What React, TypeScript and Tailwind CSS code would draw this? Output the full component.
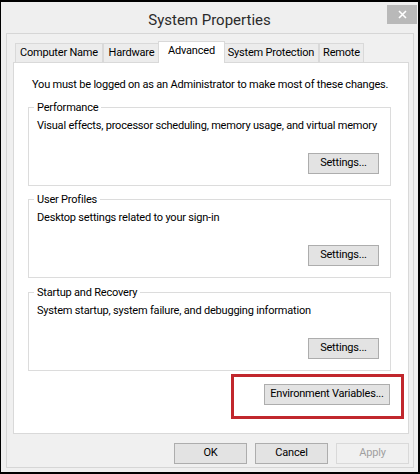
import React from "react";

const tabs = ["Computer Name", "Hardware", "Advanced", "System Protection", "Remote"];
const tabWidths: Record<string, string> = {
  "Computer Name": "w-[88px]",
  Hardware: "w-[57px]",
  Advanced: "w-[67px]",
  "System Protection": "w-[96px]",
  Remote: "w-[45px]",
};

function Button({ label, width, disabled }: { label: string; width: string; disabled?: boolean }) {
  return (
    <button
      className={`${width} h-[21px] border flex items-center justify-center whitespace-nowrap ${
        disabled ? "border-[#d9d9d9] bg-[#f0f0f0] text-[#a0a0a0]" : "border-[#adadad] bg-[#e3e3e3] text-black"
      }`}
    >
      {label}
    </button>
  );
}

function Group({ title, text }: { title: string; text: string }) {
  return (
    <fieldset className="ml-[14px] w-[363px] min-w-0 border border-[#dcdcdc] pb-[11px]">
      <legend className="ml-[5px] px-[3px] leading-[15px]">{title}</legend>
      <p className="pl-[8px] mt-[3px] leading-[15px] whitespace-nowrap">{text}</p>
      <div className="flex justify-end pr-[11px] mt-[20px]">
        <Button label="Settings..." width="w-[71px]" />
      </div>
    </fieldset>
  );
}

export default function App() {
  return (
    <div className="w-[420px] h-[474px] bg-[#efefef] border-t-2 border-r-2 border-b-2 border-l border-black flex flex-col font-['Segoe_UI','Roboto',sans-serif] text-[11px] tracking-[-0.2px] text-black">
      {/* Title bar */}
      <div className="h-[31px] relative flex items-center justify-center">
        <span className="text-[15px] tracking-normal text-[#2b2b2b] pt-[5px]">System Properties</span>
        <div className="absolute top-[3px] right-[1px] w-[30px] h-[19px] bg-[#b9b9b9] flex items-center justify-center">
          <svg width="9" height="9" viewBox="0 0 9 9">
            <path d="M1 1 L8 8 M8 1 L1 8" stroke="white" strokeWidth="1.6" />
          </svg>
        </div>
      </div>

      {/* Client area */}
      <div className="flex-1 ml-[5px] mr-[4px] mb-[4px] border border-[#d6d6d6] bg-[#f0f0f0] pl-[6px] pr-[4px] pt-[7px] flex flex-col">
        {/* Tabs */}
        <div className="flex items-end h-[21px] pl-[2px]">
          {tabs.map((t) => {
            const active = t === "Advanced";
            return (
              <div
                key={t}
                className={`${tabWidths[t]} flex items-center justify-center whitespace-nowrap border-t border-l border-r border-[#d9d9d9] ${
                  active
                    ? "h-[22px] -mb-px -mx-[2px] relative z-10 bg-white pb-[3px]"
                    : "h-[19px] bg-[#ececec]"
                }`}
              >
                {t}
              </div>
            );
          })}
        </div>

        {/* Panel */}
        <div className="h-[372px] bg-white border border-[#d9d9d9] flex flex-col">
          <p className="mt-[14px] ml-[18px] leading-[15px] whitespace-nowrap">
            You must be logged on as an Administrator to make most of these changes.
          </p>
          <div className="mt-[8px]">
            <Group title="Performance" text="Visual effects, processor scheduling, memory usage, and virtual memory" />
          </div>
          <div className="mt-[6px]">
            <Group title="User Profiles" text="Desktop settings related to your sign-in" />
          </div>
          <div className="mt-[7px]">
            <Group title="Startup and Recovery" text="System startup, system failure, and debugging information" />
          </div>
          <div className="flex justify-end pr-[4px] mt-[3px]">
            <div className="w-[173px] h-[45px] border-[3px] border-[#c1272d] flex justify-end items-start pt-[7px] pr-[11px]">
              <Button label="Environment Variables..." width="w-[126px]" />
            </div>
          </div>
        </div>

        {/* Dialog buttons */}
        <div className="flex justify-end gap-[8px] mt-[9px]">
          <Button label="OK" width="w-[73px]" />
          <Button label="Cancel" width="w-[73px]" />
          <Button label="Apply" width="w-[73px]" disabled />
        </div>
      </div>
    </div>
  );
}
